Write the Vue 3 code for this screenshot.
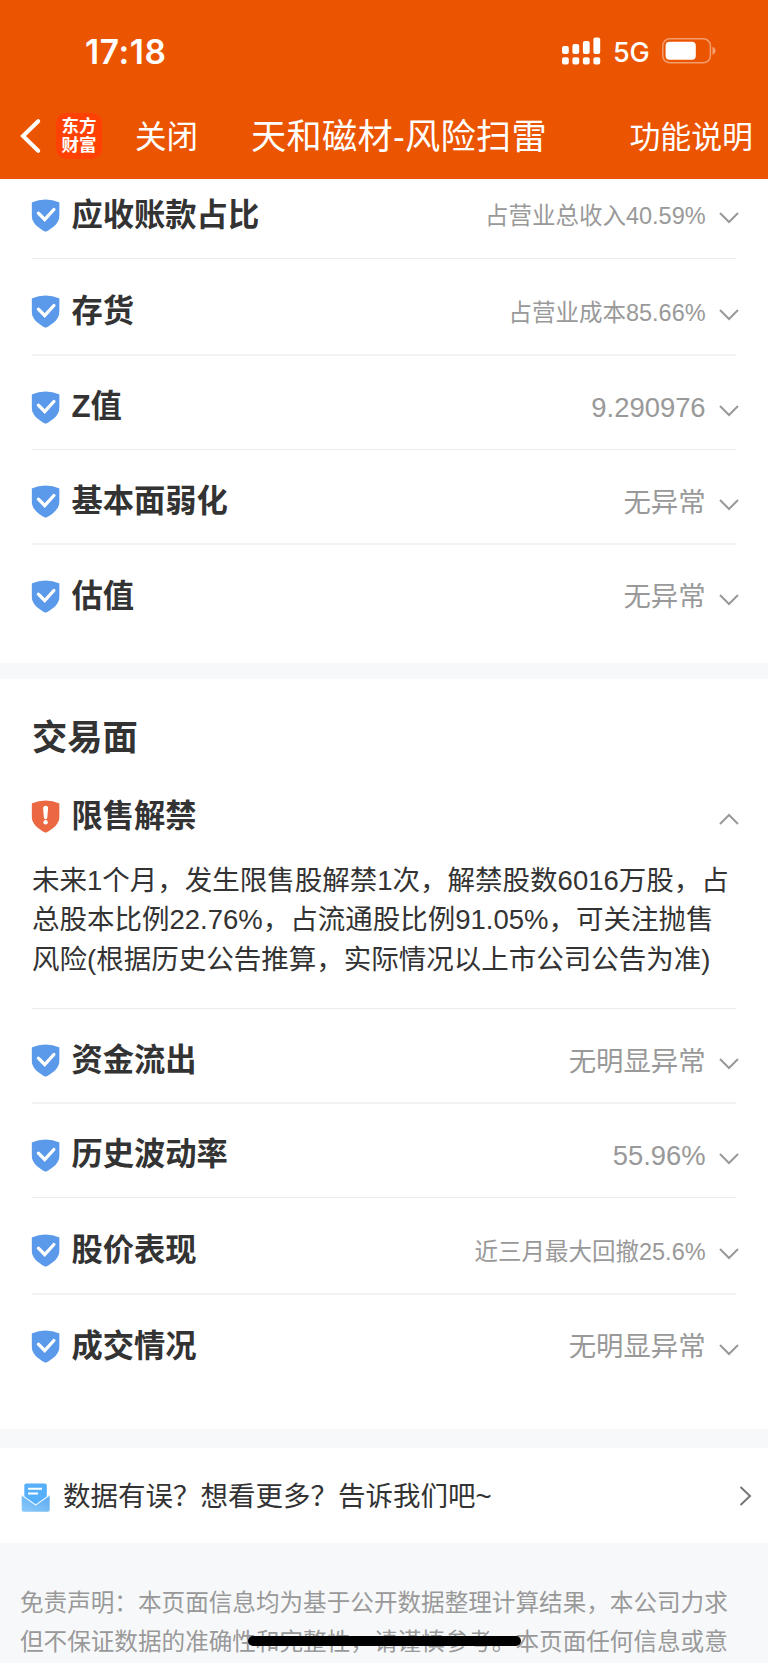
<script setup>
const fundamentals = [
  { label: '应收账款占比', value: '占营业总收入40.59%', size: 'small', row: 'first' },
  { label: '存货', value: '占营业成本85.66%', size: 'small', row: 'tall soft' },
  { label: 'Z值', value: '9.290976', size: 'normal', row: 'short' },
  { label: '基本面弱化', value: '无异常', size: 'normal', row: 'soft' },
  { label: '估值', value: '无异常', size: 'normal', row: 'last' },
]
const trading = [
  { label: '资金流出', value: '无明显异常', size: 'normal', row: 'soft' },
  { label: '历史波动率', value: '55.96%', size: 'normal', row: 'short' },
  { label: '股价表现', value: '近三月最大回撤25.6%', size: 'small', row: 'tall soft' },
  { label: '成交情况', value: '无明显异常', size: 'normal', row: 'last' },
]
const notice = [
  '未来1个月，发生限售股解禁1次，解禁股数6016万股，占',
  '总股本比例22.76%，占流通股比例91.05%，可关注抛售',
  '风险(根据历史公告推算，实际情况以上市公司公告为准)',
]
const disclaimer = [
  '免责声明：本页面信息均为基于公开数据整理计算结果，本公司力求',
  '但不保证数据的准确性和完整性，请谨慎参考。本页面任何信息或意',
]
const bars = [
  { x: 0, h: 8 },
  { x: 10.4, h: 10 },
  { x: 20.9, h: 13 },
  { x: 31.4, h: 16.5 },
]
</script>

<template>
  <div class="page">
    <header class="header">
      <div class="status">
        <span class="time">17:18</span>
        <div class="status-right">
          <svg class="signal" width="39" height="28" viewBox="0 0 39 28">
            <g v-for="b in bars" :key="b.x" fill="#fff">
              <rect :x="b.x" :y="17 - b.h" width="6.8" :height="b.h" rx="2" />
              <rect :x="b.x" y="20.2" width="6.8" height="7.3" rx="2" />
            </g>
          </svg>
          <span class="net">5G</span>
          <svg class="battery" width="54" height="26" viewBox="0 0 54 26">
            <rect x=".8" y=".8" width="47.6" height="24" rx="7" fill="none" stroke="#fff" stroke-opacity=".42" stroke-width="1.5" />
            <rect x="3.6" y="3.8" width="30.2" height="18" rx="4" fill="#fff" />
            <path d="M50.5 8.7c4 1.6 4 6.600 0 8.200z" fill="#fff" fill-opacity=".45" />
          </svg>
        </div>
      </div>
      <nav class="nav">
        <svg class="back" width="22" height="36" viewBox="0 0 22 36">
          <path d="M18.200 3.200 3 18l15.200 14.800" fill="none" stroke="#fff" stroke-width="4" stroke-linecap="round" />
        </svg>
        <div class="logo"><span>东方</span><span>财富</span></div>
        <span class="close">关闭</span>
        <h1 class="nav-title">天和磁材-风险扫雷</h1>
        <span class="help">功能说明</span>
      </nav>
    </header>

    <section class="card fundamentals">
      <div v-for="r in fundamentals" :key="r.label" class="row" :class="r.row">
        <svg class="shield" width="28" height="33" viewBox="0 0 28 33">
          <path d="M0 3.500Q14-2.500 28 3.500V16c0 8-7 13.500-14 16.700C7 29.500 0 24 0 16z" fill="#5b99eb" />
          <path d="m6.800 14.200 6.300 6.300 9.200-10" fill="none" stroke="#fff" stroke-width="3.300" stroke-linecap="round" />
        </svg>
        <span class="label">{{ r.label }}</span>
        <span class="value" :class="r.size">{{ r.value }}</span>
        <svg class="chevron" width="20" height="12" viewBox="0 0 20 12">
          <path d="m1 1 9 9 9-9" fill="none" stroke="#999" stroke-width="2" />
        </svg>
      </div>
    </section>

    <section class="card trading">
      <h2 class="section-title">交易面</h2>
      <div class="row alert">
        <svg class="shield" width="28" height="33" viewBox="0 0 28 33">
          <path d="M0 3.500Q14-2.500 28 3.500V16c0 8-7 13.500-14 16.700C7 29.500 0 24 0 16z" fill="#eb6843" />
          <path d="M11.500 8.300a2.500 2.500 0 0 1 5 0l-.8 9.200a1.700 1.700 0 0 1-3.400 0z" fill="#fff" />
          <circle cx="14" cy="22.300" r="2.200" fill="#fff" />
        </svg>
        <span class="label">限售解禁</span>
        <svg class="chevron up" width="20" height="12" viewBox="0 0 20 12">
          <path d="m1 11 9-9 9 9" fill="none" stroke="#999" stroke-width="2" />
        </svg>
      </div>
      <p class="notice"><span v-for="l in notice" :key="l">{{ l }}</span></p>
      <div v-for="r in trading" :key="r.label" class="row" :class="r.row">
        <svg class="shield" width="28" height="33" viewBox="0 0 28 33">
          <path d="M0 3.500Q14-2.500 28 3.500V16c0 8-7 13.500-14 16.700C7 29.500 0 24 0 16z" fill="#5b99eb" />
          <path d="m6.800 14.200 6.300 6.300 9.200-10" fill="none" stroke="#fff" stroke-width="3.300" stroke-linecap="round" />
        </svg>
        <span class="label">{{ r.label }}</span>
        <span class="value" :class="r.size">{{ r.value }}</span>
        <svg class="chevron" width="20" height="12" viewBox="0 0 20 12">
          <path d="m1 1 9 9 9-9" fill="none" stroke="#999" stroke-width="2" />
        </svg>
      </div>
    </section>

    <section class="feedback">
      <svg class="mail" width="30" height="30" viewBox="0 0 30 30">
        <defs>
          <linearGradient id="mail-front" x1="0" y1="1" x2=".7" y2="0">
            <stop offset="0" stop-color="#8bcafa" />
            <stop offset="1" stop-color="#60adf1" />
          </linearGradient>
        </defs>
        <rect x="3.300" y=".4" width="22.500" height="27" rx="2" fill="#55affa" />
        <path d="M.7 13.300q0-1 1-.6L14.700 22.500l13-9.800q1-.5 1 .6V27q0 1.700-1.700 1.700H2.400Q.7 28.700.7 27z" fill="url(#mail-front)" />
        <path d="m1 12.300 13.700 9.700 13.700-9.700" fill="none" stroke="#e8f5ff" stroke-width="1.100" />
        <path d="M7 5.700h14M7 10.500h10" stroke="#fff" stroke-width="1.900" />
      </svg>
      <span class="feedback-text">数据有误？想看更多？告诉我们吧~</span>
      <svg class="go" width="13" height="20" viewBox="0 0 13 20">
        <path d="m1.500 1 9.500 9-9.500 9" fill="none" stroke="#777" stroke-width="2" />
      </svg>
    </section>

    <footer class="disclaimer"><span v-for="l in disclaimer" :key="l">{{ l }}</span></footer>
    <div class="home-indicator"></div>
  </div>
</template>

<style>
body {
  margin: 0;
}
</style>

<style scoped>
.page {
  position: relative;
  box-sizing: border-box;
  width: 768px;
  height: 1663px;
  overflow: hidden;
  background: #f7f8fa;
  color: #333;
  font-family: "Liberation Sans", "Noto Sans CJK SC", sans-serif;
  white-space: nowrap;
}
.header {
  height: 179px;
  background: #eb5502;
  color: #fff;
}
.status {
  display: flex;
  justify-content: space-between;
  height: 95px;
  padding: 0 52px 0 85px;
  font-family: Inter, sans-serif;
}
.time {
  margin-top: 32px;
  font-size: 33.500px;
  line-height: 40px;
  font-weight: 600;
  letter-spacing: 0.600px;
}
.status-right {
  display: flex;
  align-items: flex-start;
}
.signal {
  margin-top: 37px;
}
.net {
  width: 36px;
  margin: 37px 13px 0 12px;
  font-size: 27px;
  line-height: 32px;
  font-weight: 500;
  letter-spacing: -0.3px;
}
.battery {
  margin-top: 38px;
}
.nav {
  display: flex;
  align-items: center;
  height: 82px;
  padding: 0 15px 0 20px;
}
.logo {
  display: flex;
  flex-direction: column;
  align-items: center;
  justify-content: center;
  box-sizing: border-box;
  width: 46px;
  height: 46px;
  margin-left: 14px;
  border-radius: 10px;
  background: #ff4203;
  font-size: 17.5px;
  line-height: 19.500px;
  font-weight: 700;
}
.close {
  width: 64px;
  margin: 0 0 4px 33px;
  font-size: 31.500px;
}
.nav-title {
  margin: 0 0 5px 52px;
  font-size: 35.200px;
  font-weight: 400;
  letter-spacing: 0.300px;
}
.help {
  margin: 0 0 4px auto;
  font-size: 30.900px;
}
.card {
  box-sizing: border-box;
  padding: 0 32px;
  background: #fff;
}
.fundamentals {
  height: 484px;
}
.trading {
  height: 750px;
  margin-top: 16px;
  padding-top: 33px;
}
.row {
  display: flex;
  align-items: center;
  box-sizing: border-box;
  height: 95px;
  padding-top: 10px;
  border-bottom: 1px solid #ebebeb;
}
.soft {
  border-bottom: 2px solid #f2f2f2;
}
.first {
  height: 80px;
  padding-top: 0;
  padding-bottom: 7px;
}
.tall {
  height: 97px;
}
.short {
  height: 94px;
}
.last {
  padding-top: 8px;
  border-bottom: 0;
}
.shield {
  flex: none;
  transform: translateX(-0.400px);
}
.label {
  margin-left: 11.400px;
  font-size: 31.300px;
  line-height: 40px;
  font-weight: 700;
}
.first .label {
  margin-top: 1px;
}
.short .label {
  margin-bottom: 2px;
}
.value {
  margin-left: auto;
  color: #999;
  line-height: 40px;
}
.small {
  margin-top: 2px;
  font-size: 23.500px;
}
.normal {
  font-size: 27.400px;
}
.soft .normal {
  margin-top: 2px;
}
.chevron {
  flex: none;
  margin: 6px -3px 0 13.400px;
}
.section-title {
  margin: 0;
  font-size: 35.300px;
  line-height: 52px;
  font-weight: 700;
}
.alert {
  height: 60px;
  margin-top: 22px;
  padding: 0;
  border: 0;
}
.alert .label {
  margin-top: 1px;
}
.up {
  margin: 6px -3px 0 auto;
}
.notice {
  display: flex;
  flex-direction: column;
  box-sizing: border-box;
  height: 163px;
  margin: 0;
  padding-top: 15px;
  border-bottom: 1px solid #ebebeb;
  font-size: 27.500px;
  line-height: 39.300px;
}
.feedback {
  display: flex;
  align-items: center;
  height: 95px;
  margin-top: 19px;
  padding: 0 16px 0 21px;
  background: #fff;
  font-size: 27.500px;
}
.mail {
  margin-top: 4px;
}
.feedback-text {
  margin: 0 0 3px 12px;
}
.go {
  margin: 1px 0 0 auto;
}
.disclaimer {
  display: flex;
  flex-direction: column;
  padding: 41px 20px 0;
  color: #999;
  font-size: 23.600px;
  line-height: 39.400px;
}
.home-indicator {
  position: absolute;
  left: 248px;
  top: 1636px;
  width: 273px;
  height: 10px;
  border-radius: 5px;
  background: #000;
}
</style>
